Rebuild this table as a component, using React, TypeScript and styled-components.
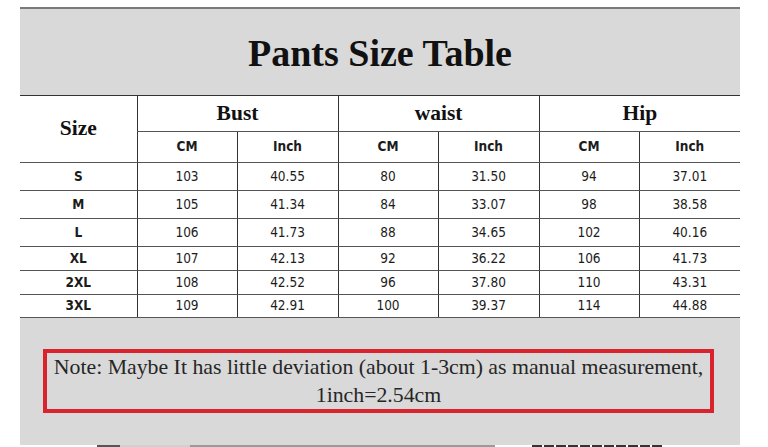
import React from "react";
import styled, { createGlobalStyle } from "styled-components";

const GlobalStyle = createGlobalStyle`
  html, body {
    margin: 0;
    padding: 0;
    background: #ffffff;
  }
`;

const Page = styled.div`
  width: 768px;
  height: 447px;
  overflow: hidden;
  padding-top: 7px;
  box-sizing: border-box;
`;

const Panel = styled.div`
  width: 720px;
  margin-left: 20px;
  border-top: 2px solid #7a7a7a;
  background: #d9d9d9;
`;

const TitleBand = styled.div`
  height: 86px;
  display: flex;
  align-items: center;
  justify-content: center;
  font-family: "Liberation Serif", "Times New Roman", serif;
  font-weight: 700;
  font-size: 38px;
  color: #111;
  padding-top: 2px;
  box-sizing: border-box;
`;

const Table = styled.table`
  width: 720px;
  table-layout: fixed;
  border-collapse: collapse;
  background: #ffffff;
  border-top: 1px solid #333;
  border-bottom: 1px solid #333;
`;

const Row = styled.tr<{ $h: number }>`
  height: ${(p) => p.$h}px;
`;

const Cell = styled.td<{ $first?: boolean; $bold?: boolean }>`
  padding: 0;
  text-align: center;
  vertical-align: middle;
  border-bottom: 1px solid #555;
  border-left: ${(p) => (p.$first ? "none" : "1px solid #333")};
  font-family: "DejaVu Sans Condensed", "DejaVu Sans", sans-serif;
  font-stretch: condensed;
  font-size: 13.5px;
  font-weight: ${(p) => (p.$bold ? 700 : 400)};
  color: #1c1c1c;
  line-height: 1;
`;

const GroupHead = styled.th<{ $first?: boolean }>`
  padding: 0;
  text-align: center;
  vertical-align: middle;
  border-bottom: 1px solid #555;
  border-left: ${(p) => (p.$first ? "none" : "1px solid #333")};
  font-family: "Liberation Serif", "Times New Roman", serif;
  font-weight: 700;
  font-size: 21.5px;
  color: #111;
  line-height: 1;
`;

const Footer = styled.div`
  height: 127px;
  padding: 31px 26px 0 23px;
  box-sizing: border-box;
`;

const NoteBox = styled.div`
  height: 64px;
  border: 4px solid #d9232d;
  box-sizing: border-box;
  font-family: "Liberation Serif", "Times New Roman", serif;
  font-size: 21.8px;
  line-height: 28px;
  color: #262626;
  text-align: center;
`;

const Strip = styled.div`
  position: relative;
  height: 3px;
`;

const Mark = styled.span<{ $x: number; $w: number; $c: string; $dash?: boolean }>`
  position: absolute;
  top: 0;
  left: ${(p) => p.$x}px;
  width: ${(p) => p.$w}px;
  height: 3px;
  background: ${(p) =>
    p.$dash
      ? `repeating-linear-gradient(90deg, ${p.$c} 0 10px, #ffffff 10px 12px)`
      : p.$c};
`;

const rows = [
  ["S", "103", "40.55", "80", "31.50", "94", "37.01", 28],
  ["M", "105", "41.34", "84", "33.07", "98", "38.58", 28],
  ["L", "106", "41.73", "88", "34.65", "102", "40.16", 28],
  ["XL", "107", "42.13", "92", "36.22", "106", "41.73", 24],
  ["2XL", "108", "42.52", "96", "37.80", "110", "43.31", 24],
  ["3XL", "109", "42.91", "100", "39.37", "114", "44.88", 23],
] as const;

export default function App() {
  return (
    <Page>
      <GlobalStyle />
      <Panel>
        <TitleBand>Pants Size Table</TitleBand>
        <Table>
          <colgroup>
            <col style={{ width: 117 }} />
            <col style={{ width: 100 }} />
            <col style={{ width: 101 }} />
            <col style={{ width: 100 }} />
            <col style={{ width: 101 }} />
            <col style={{ width: 100 }} />
            <col style={{ width: 101 }} />
          </colgroup>
          <thead>
            <Row $h={36}>
              <GroupHead $first rowSpan={2}>
                Size
              </GroupHead>
              <GroupHead colSpan={2}>Bust</GroupHead>
              <GroupHead colSpan={2}>waist</GroupHead>
              <GroupHead colSpan={2}>Hip</GroupHead>
            </Row>
            <Row $h={31}>
              {["CM", "Inch", "CM", "Inch", "CM", "Inch"].map((u, i) => (
                <Cell as="th" key={i} $bold>
                  {u}
                </Cell>
              ))}
            </Row>
          </thead>
          <tbody>
            {rows.map((r, i) => (
              <Row $h={r[7]} key={i}>
                <Cell $first $bold>
                  {r[0]}
                </Cell>
                {r.slice(1, 7).map((v, j) => (
                  <Cell key={j}>{v}</Cell>
                ))}
              </Row>
            ))}
          </tbody>
        </Table>
        <Footer>
          <NoteBox>
            Note: Maybe It has little deviation (about 1-3cm) as manual measurement,
            <br />
            1inch=2.54cm
          </NoteBox>
        </Footer>
      </Panel>
      <Strip>
        <Mark $x={97} $w={23} $c="#555" />
        <Mark $x={120} $w={70} $c="#d0d0d0" />
        <Mark $x={190} $w={305} $c="#9a9a9a" />
        <Mark $x={532} $w={130} $c="#333" $dash />
      </Strip>
    </Page>
  );
}
